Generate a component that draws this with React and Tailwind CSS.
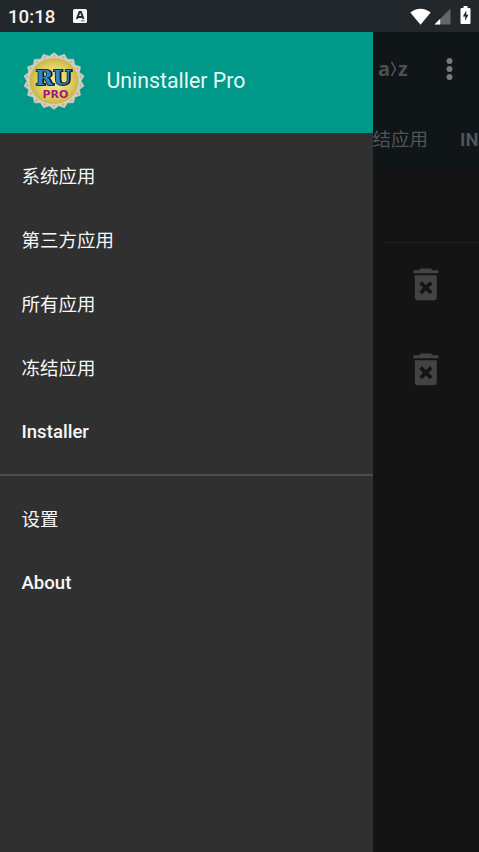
const mainItems = [
  { label: '系统应用' },
  { label: '第三方应用' },
  { label: '所有应用' },
  { label: '冻结应用' },
  { label: 'Installer', latin: true },
]

const moreItems = [
  { label: '设置' },
  { label: 'About', latin: true },
]

const spikes = Array.from({ length: 36 }, (_, i) => {
  const r = i % 2 === 0 ? 30.5 : 27
  const a = (i * Math.PI) / 18 - Math.PI / 2
  return `${(31 + r * Math.cos(a)).toFixed(2)},${(29 + r * 0.93 * Math.sin(a)).toFixed(2)}`
}).join(' ')

const studs = Array.from({ length: 18 }, (_, i) => {
  const a = (i * Math.PI) / 9 - Math.PI / 2
  return { x: 31 + 27 * Math.cos(a), y: 29 + 25 * Math.sin(a) }
})

function StatusBar() {
  return (
    <header className="flex h-8 shrink-0 items-center bg-[#22272b] pl-2 text-white">
      <span className="w-[65px] pt-px text-[18.7px] leading-8 font-medium text-[#f2f2f2]">10:18</span>
      <svg width="14" height="14" viewBox="0 0 14 14">
        <rect width="14" height="14" rx="1.5" fill="#f5f5f5" />
        <path d="M3.8 10 6.6 3h1.3l2.6 7M5 8h4.2" fill="none" stroke="#22272b" strokeWidth="1.9" />
        <path d="M8 11.9h3.5" stroke="#22272b" strokeWidth="0.7" />
      </svg>
      <div className="ml-auto flex items-center pr-2">
        <svg width="21" height="17" viewBox="0 0 21 17">
          <path d="M.3 4.6C6.1-.5 14.9-.5 20.7 4.6L10.5 16.7Z" fill="#fff" />
        </svg>
        <svg className="ml-[3px]" width="17" height="17" viewBox="0 0 17 17">
          <path d="M16.5.5v16H.5Z" fill="#63676a" />
          <path d="M6.2 10.8v5.7H.5Z" fill="#fff" />
        </svg>
        <svg className="mb-0.5 ml-[9px]" width="11" height="18" viewBox="0 0 11 18">
          <path d="M3.5 0h4v2H9.5q1 0 1 1v14q0 1-1 1h-8q-1 0-1-1V3q0-1 1-1h2Z" fill="#fff" />
          <path d="M6.3 4.5 2.8 10.4h2.4v4.4l3.3-6H6.3Z" fill="#22272b" />
        </svg>
      </div>
    </header>
  )
}

function Logo() {
  return (
    <svg className="mb-1 shrink-0" width="62" height="58" viewBox="0 0 62 58">
      <defs>
        <radialGradient id="gold">
          <stop offset="0" stopColor="#f4ea9e" />
          <stop offset="0.6" stopColor="#e6d568" />
          <stop offset="1" stopColor="#cdb548" />
        </radialGradient>
      </defs>
      <polygon points={spikes} fill="#cfd0c4" stroke="#c3c8bb" strokeWidth="0.8" strokeLinejoin="round" />
      {studs.map((s, i) => (
        <circle key={i} cx={s.x} cy={s.y} r="1.2" fill="#d2ad8c" />
      ))}
      <ellipse cx="31" cy="29" rx="24.5" ry="23" fill="url(#gold)" />
      <text
        x="12.5"
        y="33"
        textLength="36"
        lengthAdjust="spacingAndGlyphs"
        fontSize="20"
        fontWeight="700"
        fill="#2a86c4"
        stroke="#131a20"
        strokeWidth="1.5"
        className="font-['DejaVu_Serif',serif] [paint-order:stroke] [filter:drop-shadow(1.3px_0_0_#131a20)]"
      >
        RU
      </text>
      <text
        x="19.5"
        y="45.8"
        textLength="26"
        lengthAdjust="spacingAndGlyphs"
        fontSize="11"
        fontWeight="700"
        fill="#a3197c"
        className="font-['DejaVu_Sans',sans-serif]"
      >
        PRO
      </text>
    </svg>
  )
}

function MenuItem({ label, latin }) {
  return (
    <button
      className={`flex h-16 w-full items-center pl-[21.5px] text-left text-[#f7f7f7] ${
        latin ? 'text-[18.6px] font-medium' : 'pt-0.5 text-[18.5px]'
      }`}
    >
      {label}
    </button>
  )
}

function Drawer() {
  return (
    <aside className="w-[372.5px] shrink-0 bg-[#303030]">
      <div className="flex h-[101px] items-center bg-[#009888] pt-px pl-[22.5px]">
        <Logo />
        <h1 className="ml-[22px] pb-1 text-[21.3px] text-[#e6f9f6]">Uninstaller Pro</h1>
      </div>
      <nav className="pt-3">
        {mainItems.map((item) => (
          <MenuItem key={item.label} {...item} />
        ))}
        <div className="mt-[9px] mb-3 h-[1.5px] bg-[#4b4b4b]" />
        {moreItems.map((item) => (
          <MenuItem key={item.label} {...item} />
        ))}
      </nav>
    </aside>
  )
}

function TrashIcon() {
  return (
    <svg width="26" height="33" viewBox="0 0 26 33">
      <path d="M7.5 0.6h10.5l1.5 1.7H25.5v3H0.3v-3H6Z" fill="#434343" />
      <path d="M1.8 7.3h22V29q0 3.3-3.3 3.3H5q-3.2 0-3.2-3.3Z" fill="#434343" />
      <path d="m7.6 14.6 10.6 10.2m0-10.2L7.6 24.8" stroke="#141414" strokeWidth="3.8" />
    </svg>
  )
}

// Visible strip of the app list, dimmed while the drawer is open
function DimmedPage() {
  return (
    <main className="min-w-0 flex-1 overflow-hidden bg-[#141414]">
      <div className="h-[137px] bg-[#101517]">
        <div className="flex h-[75px] items-center pl-[5.5px]">
          <div className="flex w-[30px] items-center pb-0.5 text-[20px] font-bold text-[#4c5052] font-['Open_Sans','Noto_Sans',sans-serif]">
            <span>a</span>
            <svg width="8" height="17" viewBox="0 0 8 17" fill="none" stroke="#4c5052" strokeWidth="1.7">
              <path d="m1.5 2 4 7-4 7" />
            </svg>
            <span>z</span>
          </div>
          <svg className="mb-px ml-[38px]" width="7" height="22" viewBox="0 0 7 22" fill="#75797a">
            <circle cx="3.5" cy="3" r="3" />
            <circle cx="3.5" cy="11" r="3" />
            <circle cx="3.5" cy="19" r="3" />
          </svg>
        </div>
        <div className="flex h-16 items-center pt-[3px] whitespace-nowrap text-[18.5px] text-[#505456]">
          <span>结应用</span>
          <span className="ml-8 font-bold">IN</span>
        </div>
      </div>
      <div className="ml-[11px] h-[74px] border-b border-[#202020]" />
      <div className="flex flex-col gap-[52px] pt-[25px] pl-[40.5px]">
        <TrashIcon />
        <TrashIcon />
      </div>
    </main>
  )
}

export default function App() {
  return (
    <div className="flex h-screen w-full flex-col overflow-hidden bg-[#141414] font-[Roboto,'Noto_Sans_CJK_SC',sans-serif]">
      <StatusBar />
      <div className="flex min-h-0 flex-1">
        <Drawer />
        <DimmedPage />
      </div>
    </div>
  )
}
